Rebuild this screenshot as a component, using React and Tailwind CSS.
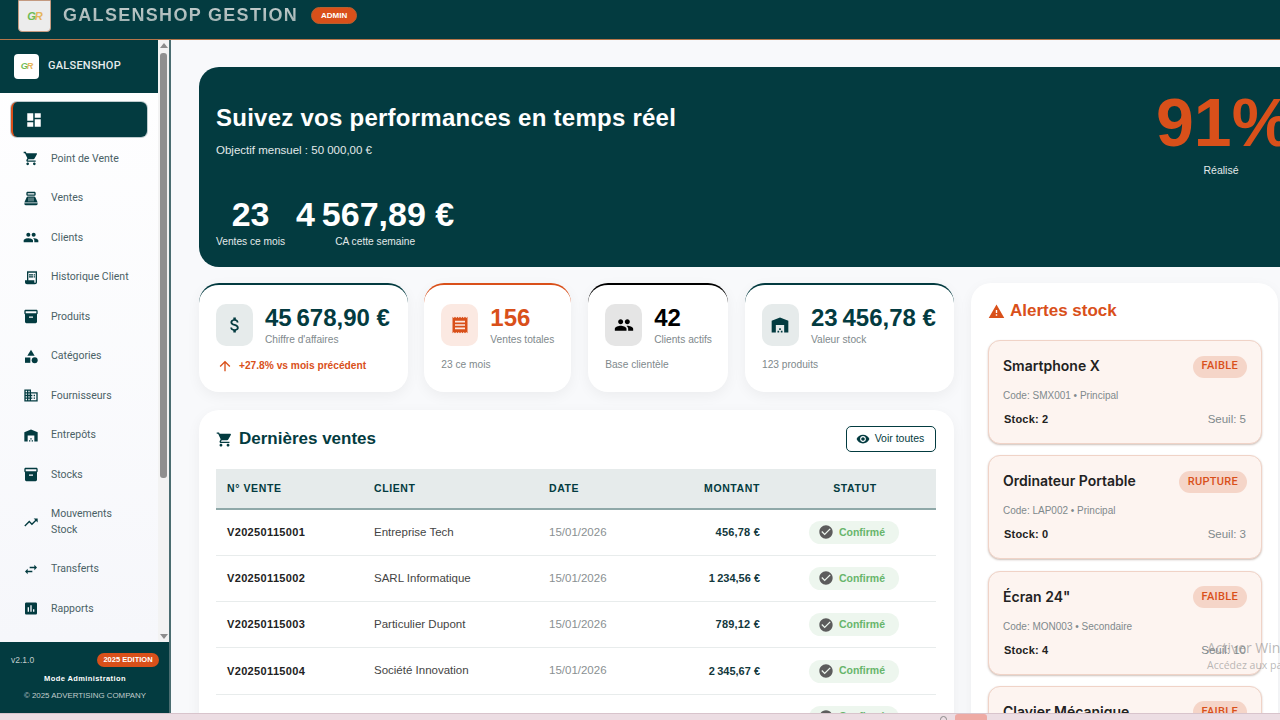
import React from 'react';
import {
  MdDashboard, MdShoppingCart, MdPointOfSale, MdPeople, MdReceiptLong, MdReceipt, MdInventory2, MdCategory,
  MdDomain, MdWarehouse, MdTrendingUp, MdSwapHoriz, MdAssessment, MdAttachMoney, MdArrowUpward,
  MdWarning, MdVisibility, MdCheckCircle,
} from 'react-icons/md';

const navItems = [
  { label: 'Point de Vente', icon: MdShoppingCart },
  { label: 'Ventes', icon: MdPointOfSale },
  { label: 'Clients', icon: MdPeople },
  { label: 'Historique Client', icon: MdReceiptLong },
  { label: 'Produits', icon: MdInventory2 },
  { label: 'Catégories', icon: MdCategory },
  { label: 'Fournisseurs', icon: MdDomain },
  { label: 'Entrepôts', icon: MdWarehouse },
  { label: 'Stocks', icon: MdInventory2 },
  { label: 'Mouvements Stock', icon: MdTrendingUp, tall: true },
  { label: 'Transferts', icon: MdSwapHoriz },
  { label: 'Rapports', icon: MdAssessment },
];

const sales = [
  ['V20250115001', 'Entreprise Tech', '456,78\u00a0€'],
  ['V20250115002', 'SARL Informatique', '1\u202f234,56\u00a0€'],
  ['V20250115003', 'Particulier Dupont', '789,12\u00a0€'],
  ['V20250115004', 'Société Innovation', '2\u202f345,67\u00a0€'],
  ['V20250115005', 'Client Divers', '678,90\u00a0€'],
];

const alerts = [
  { name: 'Smartphone X', tag: 'FAIBLE', code: 'Code: SMX001 • Principal', stock: 'Stock: 2', seuil: 'Seuil: 5' },
  { name: 'Ordinateur Portable', tag: 'RUPTURE', code: 'Code: LAP002 • Principal', stock: 'Stock: 0', seuil: 'Seuil: 3' },
  { name: 'Écran 24"', tag: 'FAIBLE', code: 'Code: MON003 • Secondaire', stock: 'Stock: 4', seuil: 'Seuil: 10' },
  { name: 'Clavier Mécanique', tag: 'FAIBLE', code: 'Code: KEY004 • Principal', stock: 'Stock: 3', seuil: 'Seuil: 8' },
];

function Logo({ className }) {
  return (
    <span className={`font-['Liberation_Sans',sans-serif] font-bold italic tracking-[-1px] ${className}`}>
      <span className="text-[#6dbb55]">G</span>
      <span className="text-[#e6b55a]">R</span>
    </span>
  );
}

function StatCard({ width, topBorder, iconBox, icon: Icon, iconColor, value, valueColor, label, children }) {
  return (
    <div className={`${width} ${topBorder} h-[109px] shrink-0 rounded-[20px] border-t-2 bg-white pl-[17px] pt-[19px] shadow-[0_4px_14px_rgba(0,0,0,0.05)]`}>
      <div className="flex gap-[12px]">
        <div className={`${iconBox} flex h-[42px] w-[37px] items-center justify-center rounded-[10px]`}>
          <Icon className={`${iconColor} text-[20px]`} />
        </div>
        <div>
          <div className={`${valueColor} text-[24px] font-bold leading-[28px]`}>{value}</div>
          <div className="mt-[1px] text-[10.2px] leading-[14px] text-[#80898c]">{label}</div>
        </div>
      </div>
      {children}
    </div>
  );
}

export default function App() {
  return (
    <div className="relative flex h-[720px] w-[1280px] flex-col overflow-hidden bg-[#f8f9fb] font-['Liberation_Sans',Arial,sans-serif]">
      <header className="flex h-[40px] shrink-0 items-start border-b border-[#b5764a] bg-[#033b40] pl-[18px]">
        <div className="flex h-[32px] w-[33px] items-center justify-center rounded-b-[4px] border border-[#c49a80] bg-[#ececec]">
          <Logo className="text-[11px]" />
        </div>
        <div className="ml-[12px] mt-[4px] bg-linear-to-b from-[#c8d0d0] to-[#98acac] bg-clip-text text-[18px] font-bold leading-[22px] tracking-[1.3px] text-transparent">
          GALSENSHOP GESTION
        </div>
        <div className="ml-[13px] mt-[7px] flex h-[17px] w-[46px] items-center justify-center rounded-full border border-[#b5602f] bg-[#d9501a] text-[8px] font-bold text-white">
          ADMIN
        </div>
      </header>

      <div className="flex min-h-0 flex-1">
        <aside className="flex w-[171px] shrink-0 flex-col border-r-2 border-[#4b6d71] bg-white">
          <div className="flex min-h-0 flex-1">
            <div className="w-[158px] shrink-0 bg-linear-to-b from-white to-[#f6f7fb]">
              <div className="flex h-[53px] items-center bg-[#033b40] pl-[14px]">
                <div className="flex h-[25px] w-[25px] items-center justify-center rounded-[4px] bg-white">
                  <Logo className="text-[9px]" />
                </div>
                <span className="ml-[9px] font-['Roboto',sans-serif] text-[11px] font-medium tracking-[0.25px] text-[#e6ecec]">GALSENSHOP</span>
              </div>
              <nav className="flex flex-col gap-[4px] pl-[11px] pr-[11px] pt-[9px]">
                <div className="flex h-[35px] items-center rounded-[6px] border-l-2 border-[#d9501a] bg-[#033b40] pl-[12px] shadow-[0_0_0_1px_rgba(4,56,62,0.25)]">
                  <MdDashboard className="text-[18px] text-white" />
                </div>
                {navItems.map(({ label, icon: Icon, tall }) => (
                  <div key={label} className={`${tall ? 'h-[51px]' : 'h-[35.5px]'} flex items-center pl-[12px]`}>
                    <Icon className="w-[16px] shrink-0 text-[17px] text-[#033b40]" />
                    <span className="ml-[12px] max-w-[85px] font-['Roboto',sans-serif] text-[10.5px] leading-[16px] text-[#4a6166]">
                      {tall ? <>Mouvements<br />Stock</> : label}
                    </span>
                  </div>
                ))}
              </nav>
            </div>
            <div className="relative w-[11px] shrink-0 bg-[#f3f3f3]">
              <div className="mx-auto mt-[3px] h-0 w-0 border-x-[4px] border-b-[5px] border-x-transparent border-b-[#8c8c8c]" />
              <div className="mx-auto mt-[5px] h-[425px] w-[7px] rounded-[3px] bg-[#8f8f8f]" />
              <div className="absolute bottom-[3px] left-[1.5px] h-0 w-0 border-x-[4px] border-t-[5px] border-x-transparent border-t-[#8c8c8c]" />
            </div>
          </div>
          <div className="h-[71px] shrink-0 bg-[#033b40] pl-[11px] pr-[10px] pt-[11px]">
            <div className="flex items-center justify-between">
              <span className="text-[8.5px] text-[#c0cccc]">v2.1.0</span>
              <span className="flex h-[14px] w-[62px] items-center justify-center rounded-full bg-[#d9501a] text-[7.5px] font-bold text-white">2025 EDITION</span>
            </div>
            <div className="mt-[6px] text-center text-[7.5px] font-bold tracking-[0.4px] text-white">Mode Administration</div>
            <div className="mt-[6px] text-center text-[7.9px] text-[#c0cccc]">© 2025 ADVERTISING COMPANY</div>
          </div>
        </aside>

        <main className="min-w-0 flex-1 overflow-hidden pl-[28px] pt-[27px]">
          <section className="flex h-[200px] w-[1110px] justify-between rounded-[20px] bg-[#033b40] pl-[17px] text-white">
            <div>
              <h1 className="mt-[36px] text-[24px] font-bold leading-[30px] tracking-[0.25px]">Suivez vos performances en temps réel</h1>
              <p className="mt-[9px] text-[11.5px] leading-[16px] text-[#e3eaea]">Objectif mensuel : 50 000,00 €</p>
              <div className="mt-[37px] flex gap-[11px]">
                <div className="text-center">
                  <div className="text-[34px] font-bold leading-[38px]">23</div>
                  <div className="mt-[2px] text-[10.2px] leading-[14px] text-[#e3eaea]">Ventes ce mois</div>
                </div>
                <div className="text-center">
                  <div className="text-[34px] font-bold leading-[38px]">{'4\u202f567,89\u00a0€'}</div>
                  <div className="mt-[2px] text-[10.2px] leading-[14px] text-[#e3eaea]">CA cette semaine</div>
                </div>
              </div>
            </div>
            <div className="mr-[17px] mt-[16px] w-[136px] text-center">
              <div className="text-[68px] font-bold leading-[78px] text-[#d9501a]">91%</div>
              <div className="mt-[2px] pr-[6px] text-[10.5px] text-[#e3eaea]">Réalisé</div>
            </div>
          </section>

          <div className="mt-[16px] flex gap-[17px]">
            <div className="w-[755px] shrink-0">
              <div className="flex justify-between">
                <StatCard width="w-[208.5px]" topBorder="border-[#033b40]" iconBox="bg-[#e6ebeb]" icon={MdAttachMoney} iconColor="text-[#033b40]" value={'45\u202f678,90\u00a0€'} valueColor="text-[#033b40]" label="Chiffre d'affaires">
                  <div className="mt-[11px] flex items-center gap-[6px] pl-[1px]">
                    <MdArrowUpward className="text-[16px] text-[#d9501a]" />
                    <span className="text-[10.2px] font-bold text-[#d9501a]">+27.8% vs mois précédent</span>
                  </div>
                </StatCard>
                <StatCard width="w-[147px]" topBorder="border-[#d9501a]" iconBox="bg-[#fbe9e2]" icon={MdReceipt} iconColor="text-[#d9501a]" value="156" valueColor="text-[#d9501a]" label="Ventes totales">
                  <div className="mt-[11px] text-[10.2px] leading-[14px] text-[#80898c]">23 ce mois</div>
                </StatCard>
                <StatCard width="w-[140px]" topBorder="border-black" iconBox="bg-[#e5e5e5]" icon={MdPeople} iconColor="text-black" value="42" valueColor="text-black" label="Clients actifs">
                  <div className="mt-[11px] text-[10.2px] leading-[14px] text-[#80898c]">Base clientèle</div>
                </StatCard>
                <StatCard width="w-[209px]" topBorder="border-[#033b40]" iconBox="bg-[#e6ebeb]" icon={MdWarehouse} iconColor="text-[#033b40]" value={'23\u202f456,78\u00a0€'} valueColor="text-[#033b40]" label="Valeur stock">
                  <div className="mt-[11px] text-[10.2px] leading-[14px] text-[#80898c]">123 produits</div>
                </StatCard>
              </div>

              <section className="mt-[18px] rounded-[20px] bg-white pb-[20px] pl-[17px] pr-[18px] pt-[16px] shadow-[0_4px_14px_rgba(0,0,0,0.05)]">
                <div className="flex h-[26px] items-center justify-between">
                  <div className="flex items-center gap-[6px]">
                    <MdShoppingCart className="text-[17px] text-[#033b40]" />
                    <h2 className="text-[17px] font-bold leading-[24px] text-[#033b40]">Dernières ventes</h2>
                  </div>
                  <button type="button" className="flex h-[26px] w-[90px] items-center justify-center gap-[5px] rounded-[5px] border border-[#033b40] pr-[2px] text-[10.5px] text-[#033b40]">
                    <MdVisibility className="text-[14px]" />
                    Voir toutes
                  </button>
                </div>
                <table className="mt-[17px] w-[720px] table-fixed border-collapse text-[11px]">
                  <thead>
                    <tr className="h-[40px] border-b-[2px] border-[#8fa8a8] bg-[#e6ebeb] text-[10.5px] font-bold tracking-[0.6px] text-[#033b40]">
                      <th className="w-[147px] pl-[11px] text-left">N° VENTE</th>
                      <th className="w-[175px] pl-[11px] text-left">CLIENT</th>
                      <th className="w-[111px] pl-[11px] text-left">DATE</th>
                      <th className="w-[122px] pr-[11px] text-right">MONTANT</th>
                      <th className="w-[165px] pl-[3px] text-center">STATUT</th>
                    </tr>
                  </thead>
                  <tbody>
                    {sales.map(([id, client, amount]) => (
                      <tr key={id} className="h-[46.3px] border-b border-[#e8ecec]">
                        <td className="pl-[11px] font-bold tracking-[0.35px] text-[#222]">{id}</td>
                        <td className="pl-[11px] text-[11.5px] text-[#444]">{client}</td>
                        <td className="pl-[11px] text-[11.5px] text-[#8a9092]">15/01/2026</td>
                        <td className="pr-[11px] text-right font-bold tracking-[0.2px] text-[#12383d]">{amount}</td>
                        <td>
                          <div className="mx-auto flex h-[23px] w-[90px] items-center justify-center gap-[5px] rounded-full bg-[#edf6ee] pr-[4px]">
                            <MdCheckCircle className="text-[16px] text-[#5c5c5c]" />
                            <span className="text-[10.5px] font-bold text-[#67b56b]">Confirmé</span>
                          </div>
                        </td>
                      </tr>
                    ))}
                  </tbody>
                </table>
              </section>
            </div>

            <aside className="h-[560px] w-[307px] shrink-0 rounded-[20px] bg-white px-[17px] pt-[16px] shadow-[0_4px_14px_rgba(0,0,0,0.05)]">
              <div className="flex h-[24px] items-center gap-[5px]">
                <MdWarning className="text-[17px] text-[#d9501a]" />
                <h2 className="text-[17px] font-bold text-[#d9501a]">Alertes stock</h2>
              </div>
              <div className="mt-[17px] flex w-[274px] flex-col gap-[11.3px]">
                {alerts.map((a) => (
                  <div key={a.name} className="h-[104px] rounded-[12px] border border-[#f0d3c7] bg-[#fdf4f0] pl-[14px] pr-[14px] pt-[13px] shadow-[0_1px_2px_rgba(90,50,30,0.3)]">
                    <div className="flex h-[23px] items-center justify-between font-['Inter',sans-serif]">
                      <span className="text-[14px] font-semibold text-[#222]">{a.name}</span>
                      <span className="mt-[2px] flex h-[22px] items-center rounded-full bg-[#f5d5c8] px-[9px] font-['Roboto',sans-serif] text-[11px] font-medium tracking-[0.3px] text-[#d9501a]">{a.tag}</span>
                    </div>
                    <div className="mt-[12px] text-[10px] leading-[14px] text-[#80898c]">{a.code}</div>
                    <div className="mt-[9px] flex items-center justify-between pr-[1px] text-[11px] leading-[14px]">
                      <span className="pl-[1px] font-bold tracking-[0.2px] text-[#222]">{a.stock}</span>
                      <span className="text-[11.5px] text-[#80898c]">{a.seuil}</span>
                    </div>
                  </div>
                ))}
              </div>
            </aside>
          </div>
        </main>
      </div>

      <div className="relative z-10 h-[7px] shrink-0 overflow-hidden border-t border-[#d8c4cc] bg-[#ecdde3]">
        <div className="absolute left-[940px] top-[2px] h-[8px] w-[7px] rounded-full border border-[#8a8a8a]" />
        <div className="absolute left-[955px] top-[0px] h-[8px] w-[32px] rounded-t-[3px] bg-[#eeaaa4]" />
      </div>

      <div className="pointer-events-none absolute left-[1207px] top-[639px] z-20 whitespace-nowrap font-['Open_Sans',sans-serif] text-[#8a8a8a]/60">
        <div className="text-[14px] leading-[18px]">Activer Windows</div>
        <div className="text-[10.5px] leading-[16px]">Accédez aux paramètres</div>
      </div>
    </div>
  );
}
